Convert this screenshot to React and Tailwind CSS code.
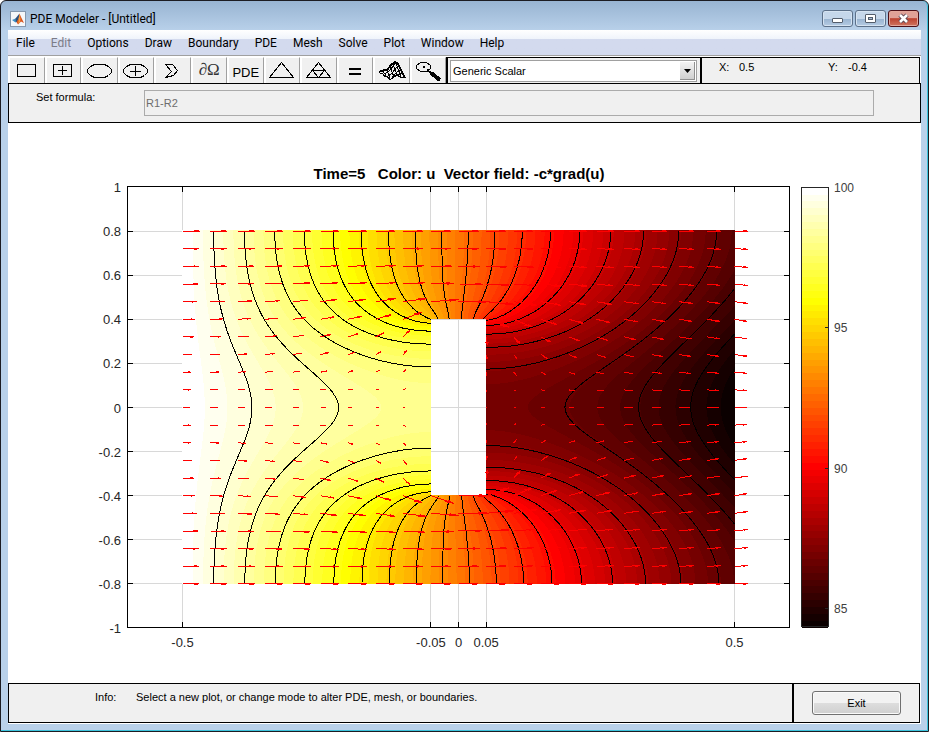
import { useMemo, useState } from "react";

// ---------------------------------------------------------------
// Heat flow through a block with a rectangular cavity (R1-R2)
// ---------------------------------------------------------------
const STEP = 0.01;
const NX = 101;
const NY = 161;
const HOLE = { i0: 45, i1: 55, j0: 40, j1: 120 };
const LEVELS = 20;

// plot coordinates
const SX = 552;
const SY = 441 / 2;
const CX = 450.5;
const CY = 284.5;
const px = (x) => CX + x * SX;
const py = (y) => CY - y * SY;

function cellActive(i, j) {
  if (i < 0 || j < 0 || i >= NX - 1 || j >= NY - 1) return 0;
  const inHole = i >= HOLE.i0 && i < HOLE.i1 && j >= HOLE.j0 && j < HOLE.j1;
  return inHole ? 0 : 1;
}

function solve() {
  const u = new Float64Array(NX * NY);
  const east = new Float64Array(NX * NY);
  const north = new Float64Array(NX * NY);
  for (let j = 0; j < NY; j++) {
    for (let i = 0; i < NX; i++) {
      const k = j * NX + i;
      u[k] = 100 - (i / (NX - 1)) * 14;
      east[k] = (cellActive(i, j) + cellActive(i, j - 1)) / 2;
      north[k] = (cellActive(i, j) + cellActive(i - 1, j)) / 2;
    }
  }
  const omega = 1.955;
  for (let n = 0; n < 500; n++) {
    for (let j = 0; j < NY; j++) {
      for (let i = 1; i < NX; i++) {
        const k = j * NX + i;
        const e = east[k];
        const w = east[k - 1];
        const t = north[k];
        const b = j > 0 ? north[k - NX] : 0;
        const sum = e + w + t + b;
        if (sum === 0) continue;
        let rhs = w * u[k - 1];
        if (e) rhs += e * u[k + 1];
        if (t) rhs += t * u[k + NX];
        if (b) rhs += b * u[k - NX];
        // outward flux of 10 on the right edge
        if (i === NX - 1) rhs -= 10 * STEP * (j === 0 || j === NY - 1 ? 0.5 : 1);
        u[k] += omega * (rhs / sum - u[k]);
      }
    }
  }
  return u;
}

function hot(i) {
  const n = i + 1;
  const r = Math.min(1, n / 24);
  const g = Math.min(1, Math.max(0, (n - 24) / 24));
  const b = Math.max(0, (n - 48) / 16);
  return `rgb(${Math.round(r * 255)},${Math.round(g * 255)},${Math.round(b * 255)})`;
}

function sample(u, x, y) {
  const fx = Math.min(NX - 1.0001, Math.max(0, (x + 0.5) / STEP));
  const fy = Math.min(NY - 1.0001, Math.max(0, (y + 0.8) / STEP));
  const i = Math.floor(fx);
  const j = Math.floor(fy);
  const a = fx - i;
  const b = fy - j;
  const k = j * NX + i;
  return (
    (1 - b) * ((1 - a) * u[k] + a * u[k + 1]) +
    b * ((1 - a) * u[k + NX] + a * u[k + NX + 1])
  );
}

function buildBands(u, min, max) {
  const paths = Array.from({ length: 64 }, () => []);
  const left = 174;
  const right = 727;
  for (let row = 107; row < 461; row++) {
    let start = left;
    let current = -1;
    for (let col = left; col <= right; col++) {
      let band = -1;
      const x = (col + 0.5 - CX) / SX;
      const y = (CY - row - 0.5) / SY;
      const inHole = col >= 423 && col < 478 && row >= 196 && row < 372;
      if (col < right && !inHole) {
        const v = ((sample(u, x, y) - min) / (max - min)) * 64;
        band = Math.max(0, Math.min(63, Math.floor(v)));
      }
      if (band !== current) {
        if (current >= 0) paths[current].push(`M${start} ${row}H${col}V${row + 1}H${start}Z`);
        start = col;
        current = band;
      }
    }
  }
  return paths.map((p) => p.join(""));
}

function buildContour(u, level) {
  // every crossing sits on one grid edge, used as the key for chaining
  const points = new Map();
  const links = new Map();
  const cross = (k1, k2) => {
    if (u[k1] > level === u[k2] > level) return null;
    const key = `${k1}-${k2}`;
    if (!points.has(key)) {
      const t = (level - u[k1]) / (u[k2] - u[k1]);
      const x = (k1 % NX) * (1 - t) + (k2 % NX) * t;
      const y = Math.floor(k1 / NX) * (1 - t) + Math.floor(k2 / NX) * t;
      points.set(key, [px(x * STEP - 0.5), py(y * STEP - 0.8)]);
      links.set(key, []);
    }
    return key;
  };
  for (let j = 0; j < NY - 1; j++) {
    for (let i = 0; i < NX - 1; i++) {
      if (!cellActive(i, j)) continue;
      const k = j * NX + i;
      const hits = [
        cross(k, k + 1),
        cross(k, k + NX),
        cross(k + 1, k + NX + 1),
        cross(k + NX, k + NX + 1),
      ].filter(Boolean);
      if (hits.length === 2) {
        links.get(hits[0]).push(hits[1]);
        links.get(hits[1]).push(hits[0]);
      }
    }
  }
  const seen = new Set();
  let d = "";
  for (const [key, next] of links) {
    if (next.length !== 1 || seen.has(key)) continue;
    let cur = key;
    let cmd = "M";
    let count = 0;
    while (cur) {
      seen.add(cur);
      const last = !links.get(cur).some((n) => !seen.has(n));
      if (count % 3 === 0 || last) {
        const [x, y] = points.get(cur);
        d += `${cmd}${x.toFixed(1)} ${y.toFixed(1)}`;
        cmd = "L";
      }
      count++;
      cur = links.get(cur).find((n) => !seen.has(n));
    }
  }
  return d;
}

function buildArrows(u) {
  const scale = 0.00233;
  const longest = 0.054;
  let d = "";
  for (let r = 0; r <= 20; r++) {
    for (let c = 0; c <= 20; c++) {
      const i = c * 5;
      const j = r * 8;
      const insideX = i >= HOLE.i0 && i < HOLE.i1;
      if (insideX && j > HOLE.j0 && j <= HOLE.j1) continue;
      const ok = (a, b) =>
        a >= 0 && b >= 0 && a < NX && b < NY &&
        !(a > HOLE.i0 && a < HOLE.i1 && b > HOLE.j0 && b < HOLE.j1);
      const diff = (di, dj) => {
        const n = 2;
        const [a1, b1] = ok(i + di * n, j + dj * n) ? [i + di * n, j + dj * n] : [i, j];
        const [a0, b0] = ok(i - di * n, j - dj * n) ? [i - di * n, j - dj * n] : [i, j];
        const dist = (a1 - a0 + b1 - b0) * STEP;
        return -(u[b1 * NX + a1] - u[b0 * NX + a0]) / dist;
      };
      let gx = diff(1, 0) * scale;
      let gy = (r === 0 || r === 20 ? 0 : diff(0, 1)) * scale;
      const len = Math.hypot(gx, gy);
      if (len > longest) {
        gx *= longest / len;
        gy *= longest / len;
      }
      const x = i * STEP - 0.5;
      const y = j * STEP - 0.8;
      const tx = x + gx;
      const ty = y + gy;
      const p = (a, b) => `${px(a).toFixed(1)} ${py(b).toFixed(1)}`;
      d += `M${p(x, y)}L${p(tx, ty)}`;
      d += `M${p(tx - 0.33 * (gx + 0.25 * gy), ty - 0.33 * (gy - 0.25 * gx))}L${p(tx, ty)}`;
      d += `L${p(tx - 0.33 * (gx - 0.25 * gy), ty - 0.33 * (gy + 0.25 * gx))}`;
    }
  }
  return d;
}

const xTicks = [-0.5, -0.05, 0, 0.05, 0.5];
const yTicks = [1, 0.8, 0.6, 0.4, 0.2, 0, -0.2, -0.4, -0.6, -0.8, -1];

function Plot() {
  const { bands, contours, arrows, min } = useMemo(() => {
    const u = solve();
    let min = 100;
    for (let j = 0; j < NY; j++) min = Math.min(min, u[j * NX + NX - 1]);
    const contours = [];
    for (let k = 1; k <= LEVELS; k++) {
      contours.push(buildContour(u, min + ((100 - min) * k) / (LEVELS + 1)));
    }
    return { bands: buildBands(u, min, 100), contours, arrows: buildArrows(u), min };
  }, []);

  const barY = (v) => Math.round(64 + ((100 - v) / (100 - min)) * 440) + 0.5;

  return (
    <svg
      viewBox="0 0 913 560"
      className="block w-full h-auto bg-white font-['Liberation_Sans',Arial,sans-serif]"
      role="img"
      aria-label="Temperature and heat flux"
    >
      <text x="451" y="56" textAnchor="middle" className="text-[15px] font-bold whitespace-pre" fill="#000">
        {"Time=5   Color: u  Vector field: -c*grad(u)"}
      </text>

      {/* Grid */}
      <g stroke="#d8d8d8" shapeRendering="crispEdges">
        {xTicks.map((x) => (
          <line key={x} x1={Math.floor(px(x)) + 0.5} x2={Math.floor(px(x)) + 0.5} y1="64" y2="504" />
        ))}
        {yTicks.slice(1, -1).map((y) => (
          <line key={y} x1="120" x2="781" y1={Math.floor(py(y)) + 0.5} y2={Math.floor(py(y)) + 0.5} />
        ))}
      </g>

      <g shapeRendering="crispEdges">
        {bands.map((d, i) => (
          <path key={i} d={d} fill={hot(i)} />
        ))}
      </g>
      <g fill="none" stroke="#000" shapeRendering="crispEdges">
        {contours.map((d, i) => (
          <path key={i} d={d} />
        ))}
      </g>
      <path d={arrows} fill="none" stroke="#f00" shapeRendering="crispEdges" />

      {/* Axes */}
      <g stroke="#000" fill="none" shapeRendering="crispEdges">
        <rect x="119.5" y="63.5" width="662" height="441" />
        {xTicks.map((x) => {
          const p = Math.floor(px(x)) + 0.5;
          return <path key={x} d={`M${p} 64v5M${p} 504v-5`} />;
        })}
        {yTicks.slice(1, -1).map((y) => {
          const p = Math.floor(py(y)) + 0.5;
          return <path key={y} d={`M120 ${p}h5M781 ${p}h-5`} />;
        })}
      </g>
      <g className="text-[13px]" fill="#262626">
        {yTicks.map((y) => (
          <text key={y} x="113" y={py(y) + 5} textAnchor="end">{y}</text>
        ))}
        {xTicks.map((x) => (
          <text key={x} x={px(x)} y="524" textAnchor="middle">{x}</text>
        ))}
      </g>

      {/* Colorbar */}
      <g shapeRendering="crispEdges">
        {bands.map((_, i) => (
          <rect key={i} x="794" y={504 - (i + 1) * 6.875} width="26" height="7.5" fill={hot(i)} />
        ))}
        <rect x="793.5" y="64.5" width="27" height="439" fill="none" stroke="#262626" />
        {[95, 90, 85].map((v) => (
          <path key={v} d={`M817 ${barY(v)}h4`} stroke="#262626" />
        ))}
      </g>
      <g className="text-[12px]" fill="#404040">
        {[100, 95, 90, 85].map((v) => (
          <text key={v} x="826" y={barY(v) + 4}>{v}</text>
        ))}
      </g>
    </svg>
  );
}

// ---------------------------------------------------------------
// Toolbar
// ---------------------------------------------------------------
function ToolIcon({ children }) {
  return (
    <svg width="30" height="22" viewBox="0 0 30 22" fill="none" stroke="#000" shapeRendering="crispEdges">
      {children}
    </svg>
  );
}

const ellipse = "M9.5 4.5H19.5L23.5 6.5L26.5 9.5V12.5L23.5 15.5L19.5 17.5H9.5L5.5 15.5L2.5 12.5V9.5L5.5 6.5Z";

const tools = [
  { name: "Rectangle", icon: <ToolIcon><rect x="5.5" y="4.5" width="18" height="12" /></ToolIcon> },
  {
    name: "Centered rectangle",
    icon: <ToolIcon><rect x="5.5" y="4.5" width="18" height="12" /><path d="M14.5 6v9M10 10.5h9" /></ToolIcon>,
  },
  { name: "Ellipse", icon: <ToolIcon><path d={ellipse} /></ToolIcon> },
  { name: "Centered ellipse", icon: <ToolIcon><path d={ellipse} /><path d="M14.5 6v10M9 11.5h11" /></ToolIcon> },
  { name: "Polygon", icon: <ToolIcon><path d="M7.5 4.5H14.5L19.5 10.5L15.5 15.5L7.5 17.5L13.5 11.5Z" /></ToolIcon> },
  {
    name: "Boundary mode",
    icon: <span className="font-['Liberation_Serif',serif] text-[17px] leading-[20px] -mt-[2px] text-[#333]">∂Ω</span>,
  },
  { name: "PDE specification", icon: <span className="text-[13px] leading-[20px] mt-1">PDE</span> },
  { name: "Initialize mesh", icon: <ToolIcon><path d="M14.5 2.5L26.5 17.5H2.5Z" /></ToolIcon> },
  {
    name: "Refine mesh",
    icon: <ToolIcon><path d="M14.5 2.5L26.5 17.5H2.5ZM8.5 10.5H20.5L14.5 17.5Z" /></ToolIcon>,
  },
  { name: "Solve PDE", icon: <ToolIcon><path d="M9 9h12M9 14h12" strokeWidth="2" /></ToolIcon> },
  {
    name: "Plot solution",
    icon: (
      <ToolIcon>
        <path d="M2 12L7 10L10 10L14 5L18 2L21 4L24 10L28 18" strokeWidth="2" />
        <path d="M2 12.5L6 14L8 17L10 16L13 20L17 17L20 15L23 17L28 18" />
        <path d="M6 11L9 16M10 10L13 19M13 7L17 17M16 4L20 15M19 3L24 17" />
        <path d="M7 14L12 11L18 4M10 17L15 13L21 6M14 19L19 13L23 10M20 15L25 13" />
      </ToolIcon>
    ),
  },
  {
    name: "Zoom",
    icon: (
      <ToolIcon>
        <path d="M7.5 2.5H13.5L17.5 5.5V8.5L13.5 11.5H7.5L3.5 8.5V5.5Z" />
        <rect x="10" y="6" width="2" height="2" fill="#000" stroke="none" />
        <path d="M14 10L18 13" strokeWidth="2" />
        <path d="M18 13L27 20" strokeWidth="4" />
      </ToolIcon>
    ),
  },
];

const menus = ["File", "Edit", "Options", "Draw", "Boundary", "PDE", "Mesh", "Solve", "Plot", "Window", "Help"];

function TitleBar() {
  return (
    <header className="h-[29px] shrink-0 flex items-center justify-between pl-[2px] pr-[2px] pt-[6px]">
      <div className="flex items-center gap-1">
        <svg width="16" height="16" viewBox="0 0 16 16" aria-hidden="true">
          <rect x="0.5" y="0.5" width="15" height="15" fill="#f4f7fa" stroke="#8598ae" />
          <path d="M2 9L5.5 7.5L7.5 10L5.5 11.5Z" fill="#3f8fc4" />
          <path d="M5.5 7.5L9.5 2.5L8.5 9L6 11.5Z" fill="#2c4f79" />
          <path d="M9.5 2.5L11 6L14 12L11 10.5L8 13.5L6.5 11L8.5 8Z" fill="#d9541e" />
          <path d="M9.5 3L10.5 8L10 11L8.3 12.8L8.8 8Z" fill="#f6a13c" />
        </svg>
        <h1 className="text-[12px] leading-4 text-black">PDE Modeler - [Untitled]</h1>
      </div>
      <div className="flex gap-[2px] -mt-px">
        <button
          aria-label="Minimize"
          className="w-[31px] h-[17px] flex items-center justify-center rounded-[3px] border border-[#5c7089] bg-linear-to-b from-[#c5d7ea] from-50% via-[#98b3d0] via-51% to-[#b5cbe3] shadow-[inset_0_0_0_1px_#d5e3f1]"
        >
          <span className="w-[11px] h-[5px] mt-1 rounded-[1px] border border-[#535d6b] bg-white" />
        </button>
        <button
          aria-label="Maximize"
          className="w-[31px] h-[17px] flex items-center justify-center rounded-[3px] border border-[#5c7089] bg-linear-to-b from-[#c5d7ea] from-50% via-[#98b3d0] via-51% to-[#b5cbe3] shadow-[inset_0_0_0_1px_#d5e3f1]"
        >
          <span className="w-[11px] h-[9px] flex items-center justify-center rounded-[1px] border border-[#535d6b] bg-white">
            <span className="w-[5px] h-[3px] border border-[#535d6b] bg-[#a9bdd5]" />
          </span>
        </button>
        <button
          aria-label="Close"
          className="w-[31px] h-[17px] flex items-center justify-center rounded-[3px] border border-[#4c1018] bg-linear-to-b from-[#e0a197] from-45% via-[#bc4230] via-51% to-[#cf7460] shadow-[inset_0_0_0_1px_#e3a79b]"
        >
          <svg width="13" height="11" viewBox="0 0 13 11" fill="none">
            <path d="M3 2L10 9M10 2L3 9" stroke="#5a4450" strokeWidth="4.5" />
            <path d="M3 2L10 9M10 2L3 9" stroke="#fff" strokeWidth="2.6" />
          </svg>
        </button>
      </div>
    </header>
  );
}

export default function App() {
  const [plotType, setPlotType] = useState("Generic Scalar");

  return (
    <div className="min-h-screen flex flex-col bg-[#b9d1ea] bg-linear-to-b from-[#98b4d2] to-[#b9d1ea] to-[30px] border border-[#1c1c22] rounded-t-[6px] font-[Roboto,'Open_Sans',sans-serif] text-black">
      <div className="flex-1 flex flex-col pl-[7px] pr-[6px] pb-[6px] border-r border-b border-[#3cc3dc] rounded-t-[6px]">
        <TitleBar />

        <nav className="h-[26px] shrink-0 flex items-center pl-[8px] gap-[16px] border-b border-[#a0a0a0] bg-linear-to-b from-white from-0% via-[#f0f4fb] via-35% to-[#d3daee] to-36%">
          {menus.map((m) => (
            <button
              key={m}
              disabled={m === "Edit"}
              className="text-[12px] leading-4 whitespace-nowrap disabled:text-[#7c7c88]"
            >
              {m}
            </button>
          ))}
        </nav>

        <main className="flex-1 flex flex-col bg-white font-['Liberation_Sans',Arial,sans-serif] text-[11px] leading-[14px]">
          <div className="flex pt-px pr-px">
            <div className="w-[438px] shrink-0 flex h-[26px]">
              {tools.map((t) => (
                <button
                  key={t.name}
                  aria-label={t.name}
                  className="flex-1 min-w-0 overflow-hidden flex items-center justify-center bg-[#f0f0f0] border-l-2 border-l-white border-t border-t-white border-r border-r-[#a0a0a0]"
                >
                  {t.icon}
                </button>
              ))}
            </div>
            <div className="w-[256px] shrink-0 h-[26px] border-l-2 border-t border-r-2 border-black bg-[#f0f0f0] p-[2px] pr-[3px]">
              <div className="relative h-[22px]">
                <select
                  aria-label="Plot type"
                  value={plotType}
                  onChange={(e) => setPlotType(e.target.value)}
                  className="appearance-none w-full h-full pl-[2px] border border-[#a0a0a0] bg-white text-[11px]"
                >
                  <option>Generic Scalar</option>
                  <option>Heat Transfer</option>
                  <option>Diffusion</option>
                </select>
                <span className="absolute right-[2px] top-[2px] w-[15px] h-[18px] flex items-center justify-center border-r border-b border-[#909090] bg-linear-to-b from-[#f3f3f3] to-[#d0d0d0] pointer-events-none">
                  <svg width="7" height="4" viewBox="0 0 7 4"><path d="M0 0h7L3.5 4z" /></svg>
                </span>
              </div>
            </div>
            <dl className="flex-1 h-[26px] flex border-t border-r border-black bg-[#f0f0f0] pl-[17px] pt-[2px]">
              <dt className="w-[20px]">X:</dt>
              <dd className="w-[89px]">0.5</dd>
              <dt className="w-[20px]">Y:</dt>
              <dd>-0.4</dd>
            </dl>
          </div>

          <div className="h-[40px] flex border border-black bg-[#f0f0f0] pl-[27px] pr-[46px] pt-[6px]">
            <label htmlFor="formula" className="w-[108px] shrink-0">Set formula:</label>
            <input
              id="formula"
              disabled
              defaultValue="R1-R2"
              className="flex-1 min-w-0 h-[26px] px-px border border-[#ababab] bg-[#f0f0f0] text-[#6d6d6d]"
            />
          </div>

          <div className="flex-1">
            <Plot />
          </div>

          <footer className="h-[40px] flex border border-black bg-[#f0f0f0] mr-px mb-px">
            <p className="flex-1 flex pl-[86px] pt-[6px]">
              <span className="w-[41px]">Info:</span>
              <span>Select a new plot, or change mode to alter PDE, mesh, or boundaries.</span>
            </p>
            <div className="w-[127px] flex items-center justify-center border-l-2 border-black">
              <button className="w-[89px] h-[24px] rounded-[3px] border border-[#707070] bg-linear-to-b from-[#f2f2f2] from-50% via-[#dddddd] via-51% to-[#cfcfcf] shadow-[inset_0_0_0_1px_#fafafa]">
                Exit
              </button>
            </div>
          </footer>
        </main>
      </div>
    </div>
  );
}
